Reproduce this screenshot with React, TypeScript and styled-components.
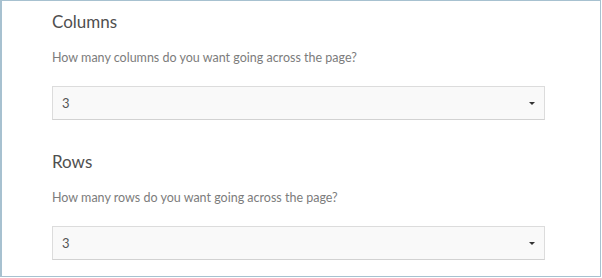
import styled, { createGlobalStyle } from 'styled-components'

const GlobalStyle = createGlobalStyle`
    html, body {
        margin: 0;
        padding: 0;
        background: #ffffff;
    }
    body {
        font-family: Lato, "Open Sans", "Liberation Sans", sans-serif;
    }
`

const Frame = styled.div`
    box-sizing: border-box;
    width: 601px;
    height: 277px;
    border: 1px solid #a7c1d0;
    border-left-width: 2px;
    background: #ffffff;
    padding: 0 0 0 50px;
    overflow: hidden;
`

const Section = styled.section`
    height: 140px;
    width: 493px;
    padding-top: 10px;
    box-sizing: border-box;
`

const Title = styled.h2`
    margin: 0;
    font-size: 17px;
    font-weight: 400;
    line-height: 22px;
    color: #4f4f4f;
`

const Hint = styled.p`
    margin: 16px 0 0 0;
    font-size: 12.5px;
    font-weight: 400;
    line-height: 18px;
    color: #7c7c7c;
`

const Select = styled.div`
    box-sizing: border-box;
    margin-top: 19px;
    height: 34px;
    display: flex;
    align-items: center;
    justify-content: space-between;
    padding: 0 9px 0 9px;
    background: #f9f9f9;
    border: 1px solid #dcdcdc;
    border-bottom-color: #d2d2d2;
    font-size: 13px;
    color: #555555;
`

const Caret = styled.span`
    width: 0;
    height: 0;
    border-left: 3px solid transparent;
    border-right: 3px solid transparent;
    border-top: 3px solid #333333;
`

const fields = [
    { title: 'Columns', hint: 'How many columns do you want going across the page?', value: '3' },
    { title: 'Rows', hint: 'How many rows do you want going across the page?', value: '3' },
]

const App = () => {
    return (
        <>
            <GlobalStyle />
            <Frame>
                {fields.map((f) => (
                    <Section key={f.title}>
                        <Title>{f.title}</Title>
                        <Hint>{f.hint}</Hint>
                        <Select>
                            <span>{f.value}</span>
                            <Caret />
                        </Select>
                    </Section>
                ))}
            </Frame>
        </>
    )
}

export default App
